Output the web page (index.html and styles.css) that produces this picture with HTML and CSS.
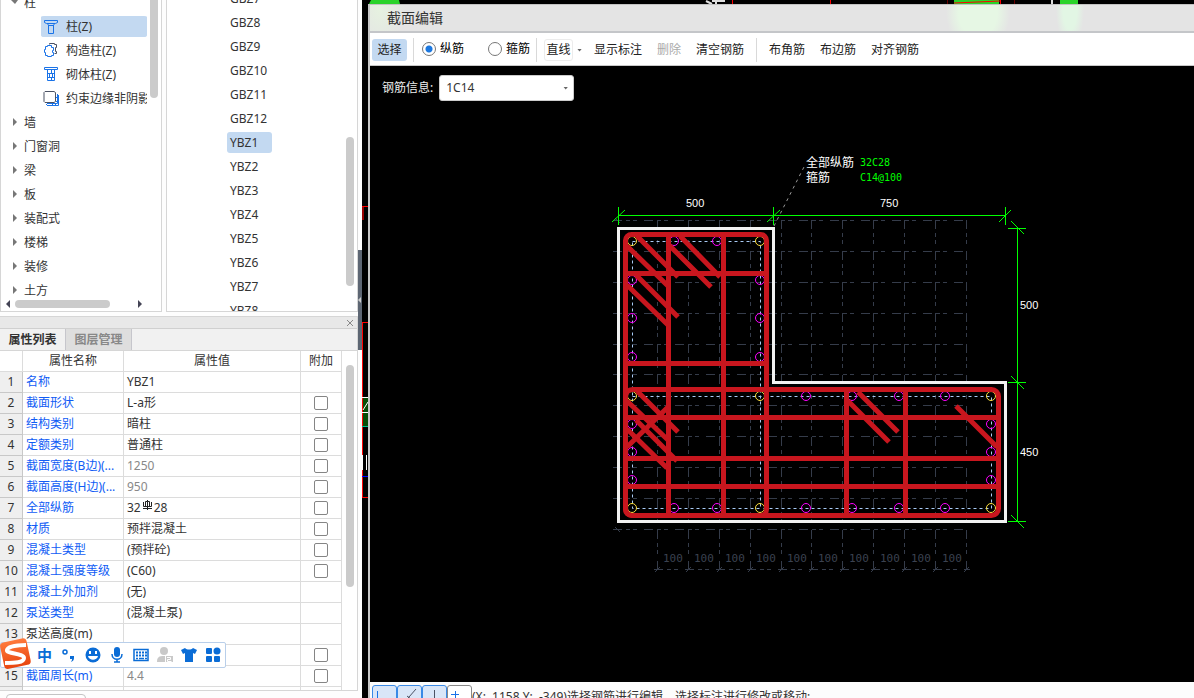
FILE: index.html
```html
<!DOCTYPE html>
<html lang="zh-CN">
<head>
    <meta charset="UTF-8">
    <meta name="viewport" content="width=device-width, initial-scale=1.0">
    <title>截面编辑</title>
    <link rel="stylesheet" href="styles.css">
</head>
<body>
    <div class="side">
        <div class="browse">
            <div class="tree">
                <ul class="tree-list">
                    <li class="group open">柱</li>
                    <li class="leaf selected">
                        <svg width="16" height="16" viewBox="0 0 16 16"><path d="M1.500 1.500h13v2l-2 1h-9l-2-1zM4.500 4.500l1 2v8h5v-8l1-2M5 6.500h6"/></svg>柱(Z)
                    </li>
                    <li class="leaf">
                        <svg width="16" height="16" viewBox="0 0 16 16"><path class="dark" d="M6.500 2.500v-1h5v1h2v3h-1v4h1v2h-2"/><path class="solid" d="M4.500 3.500h4v2h2v3h-1v2h1v3h-2v1h-4v-1h-2v-3h-1v-3h1v-3h2z"/></svg>构造柱(Z)
                    </li>
                    <li class="leaf">
                        <svg width="16" height="16" viewBox="0 0 16 16"><path d="M1.500 1.500h13v2h-13zM4.500 4v10.500h7V4M5 7.500h6M5 11.500h6M8.500 4v3.500M6.500 8v3M9.500 8v3M8.500 12v2"/></svg>砌体柱(Z)
                    </li>
                    <li class="leaf">
                        <svg width="16" height="16" viewBox="0 0 16 16"><path d="M4 13.500h10.500V4M5 15.500h10.500V5M3 14l2 2M8 13l3 3M11 13l3 3M13 11l3 3M13 7l3 3"/><path class="dark" d="M2 1.500h9l1.500 1v9l-1.500 1h-9l-1-1v-9z"/></svg>约束边缘非阴影
                    </li>
                    <li class="group">墙</li>
                    <li class="group">门窗洞</li>
                    <li class="group">梁</li>
                    <li class="group">板</li>
                    <li class="group">装配式</li>
                    <li class="group">楼梯</li>
                    <li class="group">装修</li>
                    <li class="group">土方</li>
                </ul>
                <div class="tree-scroll"><span></span></div>
                <div class="tree-hscroll">
                    <i class="arrow-left"></i><span></span><i class="arrow-right"></i>
                </div>
            </div>
            <div class="members">
                <ul>
                    <li>GBZ7</li>
                    <li>GBZ8</li>
                    <li>GBZ9</li>
                    <li>GBZ10</li>
                    <li>GBZ11</li>
                    <li>GBZ12</li>
                    <li><span class="selected">YBZ1</span></li>
                    <li>YBZ2</li>
                    <li>YBZ3</li>
                    <li>YBZ4</li>
                    <li>YBZ5</li>
                    <li>YBZ6</li>
                    <li>YBZ7</li>
                    <li>YBZ8</li>
                </ul>
                <div class="members-scroll"><span></span></div>
            </div>
        </div>

        <div class="props">
            <div class="props-title">
                <button type="button" aria-label="关闭"><svg width="8" height="8" viewBox="0 0 8 8"><path d="M1 1l6 6M7 1l-6 6"/></svg></button>
            </div>
            <div class="tabs">
                <button type="button" class="active">属性列表</button>
                <button type="button">图层管理</button>
            </div>
            <div class="props-body">
                <table>
                    <colgroup><col class="c-num"><col class="c-name"><col><col class="c-add"></colgroup>
                    <thead>
                        <tr><th></th><th>属性名称</th><th>属性值</th><th>附加</th></tr>
                    </thead>
                    <tbody>
                        <tr><td>1</td><td>名称</td><td>YBZ1</td><td></td></tr>
                        <tr><td>2</td><td>截面形状</td><td>L-a形</td><td><input type="checkbox" aria-label="截面形状"></td></tr>
                        <tr><td>3</td><td>结构类别</td><td>暗柱</td><td><input type="checkbox" aria-label="结构类别"></td></tr>
                        <tr><td>4</td><td>定额类别</td><td>普通柱</td><td><input type="checkbox" aria-label="定额类别"></td></tr>
                        <tr><td>5</td><td>截面宽度(B边)(...</td><td class="gray">1250</td><td><input type="checkbox" aria-label="截面宽度"></td></tr>
                        <tr><td>6</td><td>截面高度(H边)(...</td><td class="gray">950</td><td><input type="checkbox" aria-label="截面高度"></td></tr>
                        <tr><td>7</td><td>全部纵筋</td><td>32<svg class="rebar" width="13" height="11" viewBox="0 0 13 11"><path d="M6.500 0v10M4.500 1.500h4v5h-4zM2.500 2v4.500h8V2M2 8.500h9"/></svg>28</td><td><input type="checkbox" aria-label="全部纵筋"></td></tr>
                        <tr><td>8</td><td>材质</td><td>预拌混凝土</td><td><input type="checkbox" aria-label="材质"></td></tr>
                        <tr><td>9</td><td>混凝土类型</td><td>(预拌砼)</td><td><input type="checkbox" aria-label="混凝土类型"></td></tr>
                        <tr><td>10</td><td>混凝土强度等级</td><td>(C60)</td><td><input type="checkbox" aria-label="混凝土强度等级"></td></tr>
                        <tr><td>11</td><td>混凝土外加剂</td><td>(无)</td><td></td></tr>
                        <tr><td>12</td><td>泵送类型</td><td>(混凝土泵)</td><td></td></tr>
                        <tr><td>13</td><td class="plain">泵送高度(m)</td><td></td><td></td></tr>
                        <tr><td></td><td></td><td></td><td><input type="checkbox" aria-label="附加"></td></tr>
                        <tr><td>15</td><td>截面周长(m)</td><td class="gray">4.4</td><td><input type="checkbox" aria-label="截面周长"></td></tr>
                        <tr><td></td><td></td><td></td><td></td></tr>
                    </tbody>
                </table>
                <div class="props-scroll"><span></span></div>
            </div>
        </div>
        <div class="side-foot"><button type="button" aria-label="参数图"></button></div>

        <div class="ime">
            <svg class="ime-logo" width="32" height="32" viewBox="0 0 32 32">
                <defs><linearGradient id="og" x1="0" y1="0" x2="0" y2="1"><stop offset="0" stop-color="#ff7a3c"/><stop offset="1" stop-color="#e8450f"/></linearGradient></defs>
                <rect x="2" y="2" width="27" height="27" rx="4" fill="url(#og)" transform="rotate(-12 16 16)"/>
                <path d="M26 7C19 7 8 8 7 12s17 3 17 8-10 5-19 5" fill="none" stroke="#fff" stroke-width="4"/>
            </svg>
            <b>中</b>
            <svg width="16" height="16" viewBox="0 0 16 16"><circle cx="4" cy="5" r="2" fill="none" stroke="#0a6cd6" stroke-width="1.500"/><path d="M9 9h4v2c0 2-1 3-3 4 1-2 1-2 1-3H9z"/></svg>
            <svg width="16" height="16" viewBox="0 0 16 16"><circle cx="8" cy="8" r="7.500"/><path fill="#fff" d="M4 4h2v3H4zM10 4h2v3h-2zM3 9h10c-1 5-9 5-10 0z"/></svg>
            <svg width="16" height="16" viewBox="0 0 16 16"><rect x="5" y="0" width="6" height="10" rx="3"/><path fill="none" stroke="#0a6cd6" stroke-width="1.500" d="M3 7c0 7 10 7 10 0M8 12v3M5 15h6"/></svg>
            <svg width="16" height="16" viewBox="0 0 16 16"><rect x="1" y="2.500" width="14" height="11" fill="none" stroke="#0a6cd6" stroke-width="1.500"/><path stroke="#0a6cd6" stroke-width="2" stroke-dasharray="2 1" d="M3 5.500h11M3 8.500h11"/><path stroke="#0a6cd6" stroke-width="1.500" d="M3 11.500h2M6 11.500h5M12 11.500h2"/></svg>
            <svg width="16" height="16" viewBox="0 0 16 16" class="off"><circle cx="7" cy="4" r="4"/><path d="M0 15c0-5 2-6 7-6h9v6z"/><path fill="none" stroke="#fff" d="M8.500 15V9M10 10.500h3.500v2h-3v2h4"/></svg>
            <svg width="16" height="16" viewBox="0 0 16 16"><path d="M0 3l4-2c2 2 6 2 8 0l4 2-2 4-2-1v9H4V6L2 7z"/></svg>
            <svg width="16" height="16" viewBox="0 0 16 16"><rect x="1" y="1" width="6" height="6" rx="1"/><circle cx="12" cy="4" r="3.500"/><rect x="1" y="9" width="6" height="6" rx="1"/><rect x="9" y="9" width="6" height="6" rx="1"/></svg>
        </div>
    </div>

    <div class="splitter"><div class="grip"></div></div>

    <div class="workspace">
        <!-- main drawing, mostly hidden by the dialog -->
        <svg class="backdrop" width="832" height="698" viewBox="362 0 832 698">
            <path fill="#29d329" d="M371 0h28l1 4h-31zM954 0h45v4h-45zM1060 0h18v4h-18z"/>
            <path stroke="#f00" d="M732.500 0v4M830.500 0v4M954 3l46-2M1000.500 0v4M362 206.500h6M362 322.500h6M362.500 322v175M362 497.500h6"/>
            <path stroke="#600" d="M947.500 0v4M1014.500 0v4"/>
            <path stroke="#900" stroke-width="2" d="M363 207v13"/>
            <path stroke="#ddd" stroke-width="2" d="M706 1l6 3M712 1h13M716 0v4M1052 0v4"/>
            <path fill="#064d06" d="M363 397h5v30h-5z"/>
            <path stroke="#fff" d="M362 397.500h6M362 412.500h6M363 410l5-8M366.500 455v15M362.500 455v15"/>
            <path stroke="#00c090" d="M362 426.500h6"/>
            <path stroke="#00f" d="M362 476.500h6"/>
        </svg>

        <div class="dialog">
            <div class="dialog-title">截面编辑</div>
            <div class="toolbar">
                <button type="button" class="on">选择</button>
                <i class="sep"></i>
                <label><input type="radio" name="kind" checked>纵筋</label>
                <label><input type="radio" name="kind">箍筋</label>
                <i class="sep"></i>
                <button type="button" class="line">直线</button>
                <i class="caret"></i>
                <button type="button">显示标注</button>
                <button type="button" disabled>删除</button>
                <button type="button">清空钢筋</button>
                <i class="sep"></i>
                <button type="button">布角筋</button>
                <button type="button">布边筋</button>
                <button type="button">对齐钢筋</button>
            </div>

            <div class="canvas">
                <div class="rebar-form">
                    <label for="rebarInfo">钢筋信息:</label>
                    <span class="combo">
                        <select id="rebarInfo"><option>1C14</option></select>
                        <i class="caret"></i>
                    </span>
                </div>
                <svg class="drawing" width="824" height="616" viewBox="370 66 824 616">
                    <!-- grid -->
                    <g class="grid">
                        <path d="M613 220.500h354M613 251.500h354M613 282.500h354M613 313.500h354M613 344.500h354M613 374.500h354M613 405.500h354M613 436.500h354M613 467.500h354M613 498.500h354M613 529.500h354M654 569.500h316"/>
                        <path d="M657.500 220v354M688.500 220v354M719.500 220v354M750.500 220v354M781.500 220v354M811.500 220v354M842.500 220v354M873.500 220v354M904.500 220v354M935.500 220v354M966.500 220v354"/>
                        <path class="tick" d="M655 572l5-5M686 572l5-5M717 572l5-5M748 572l5-5M779 572l5-5M809 572l5-5M840 572l5-5M871 572l5-5M902 572l5-5M933 572l5-5M964 572l5-5M615 218l5 5M615 527l5 5"/>
                    </g>
                    <g class="grid-text">
                        <text x="663" y="562">100</text>
                        <text x="694" y="562">100</text>
                        <text x="725" y="562">100</text>
                        <text x="756" y="562">100</text>
                        <text x="787" y="562">100</text>
                        <text x="818" y="562">100</text>
                        <text x="849" y="562">100</text>
                        <text x="880" y="562">100</text>
                        <text x="911" y="562">100</text>
                        <text x="942" y="562">100</text>
                    </g>

                    <!-- section outline -->
                    <path class="outline" d="M618.500 228.500h155v154h232v139h-387z"/>

                    <!-- bar centre lines and bars -->
                    <path class="axis" d="M632.500 241.500h128v267h-128zM632.500 396.500h359v112h-231"/>
                    <g class="corner">
                        <circle cx="632" cy="241" r="4.500"/><circle cx="760" cy="241" r="4.500"/>
                        <circle cx="632" cy="396" r="4.500"/><circle cx="760" cy="396" r="4.500"/>
                        <circle cx="632" cy="508" r="4.500"/><circle cx="760" cy="508" r="4.500"/>
                        <circle cx="991" cy="396" r="4.500"/><circle cx="991" cy="508" r="4.500"/>
                    </g>
                    <g class="edge">
                        <circle cx="674" cy="241" r="4.500"/><circle cx="717" cy="241" r="4.500"/>
                        <circle cx="632" cy="280" r="4.500"/><circle cx="760" cy="280" r="4.500"/>
                        <circle cx="632" cy="318" r="4.500"/><circle cx="760" cy="318" r="4.500"/>
                        <circle cx="632" cy="357" r="4.500"/><circle cx="760" cy="357" r="4.500"/>
                        <circle cx="632" cy="424" r="4.500"/><circle cx="632" cy="452" r="4.500"/><circle cx="632" cy="480" r="4.500"/>
                        <circle cx="674" cy="508" r="4.500"/><circle cx="717" cy="508" r="4.500"/>
                        <circle cx="806" cy="396" r="4.500"/><circle cx="852" cy="396" r="4.500"/><circle cx="899" cy="396" r="4.500"/><circle cx="945" cy="396" r="4.500"/>
                        <circle cx="806" cy="508" r="4.500"/><circle cx="852" cy="508" r="4.500"/><circle cx="899" cy="508" r="4.500"/><circle cx="945" cy="508" r="4.500"/>
                        <circle cx="991" cy="424" r="4.500"/><circle cx="991" cy="452" r="4.500"/><circle cx="991" cy="480" r="4.500"/>
                    </g>

                    <!-- stirrups -->
                    <g class="stirrup">
                        <rect x="625.500" y="234.500" width="141" height="281" rx="6"/>
                        <rect x="625.500" y="389.500" width="373" height="126" rx="7"/>
                        <path d="M625.500 273.500h141M625.500 363.500h141M625.500 417.500h373M625.500 458.500h373M625.500 486.500h373"/>
                        <path d="M668.500 235v280M723.500 235v280M846.500 390v125M905.500 390v125"/>
                        <path d="M637 236l41 41M627 246l41 40M680 236l40 41M668 244l43 43M636 275l42 42M627 285l41 40"/>
                        <path d="M637 391l41 41M627 401l41 39M636 420l41 41M627 429l40 39M627 447l41 -40"/>
                        <path d="M858 392l40 40M848 401l41 41M956 406l41 41"/>
                    </g>

                    <!-- dimensions -->
                    <path class="dim" d="M618 215.500h388M618.500 207v18M773.500 207v18M1005.500 207v18M612 222l13-12M767 222l13-12M999 222l12-12M1017.500 228v294M1008 228.500h18M1008 382.500h18M1008 521.500h18M1011 221l13 13M1011 376l13 13M1011 515l13 13"/>
                    <g class="dim-text">
                        <text x="686" y="207">500</text>
                        <text x="880" y="207">750</text>
                        <text x="1020" y="309">500</text>
                        <text x="1020" y="456">450</text>
                    </g>

                    <!-- leader note -->
                    <path class="leader" d="M774 226l31-61"/>
                    <g class="note">
                        <text x="806" y="167">全部纵筋</text>
                        <text x="806" y="182">箍筋</text>
                    </g>
                    <g class="note-value">
                        <text x="860" y="166">32C28</text>
                        <text x="860" y="181">C14@100</text>
                    </g>
                </svg>
            </div>

            <div class="status">
                <button type="button" class="on" aria-label="正交"><svg width="23" height="22" viewBox="0 0 23 22"><path d="M4.500 5v12h12"/></svg></button>
                <button type="button" class="on" aria-label="捕捉"><svg width="23" height="22" viewBox="0 0 23 22"><path class="dark" d="M18 3l-7 8-5 5M9 10l4 3"/></svg></button>
                <button type="button" class="on" aria-label="垂点"><svg width="23" height="22" viewBox="0 0 23 22"><path class="dark" d="M11.500 4v12M4 16.500h15"/></svg></button>
                <button type="button" aria-label="交点"><svg width="23" height="22" viewBox="0 0 23 22"><path d="M3 8.500h8M7.500 5v8"/></svg></button>
                <span>(X:&nbsp; 1158 Y:&nbsp; -349)选择钢筋进行编辑，选择标注进行修改或移动;</span>
            </div>
        </div>
    </div>
</body>
</html>
```
FILE: styles.css
```css
* { box-sizing: border-box; }
body {
    margin: 0;
    height: 100vh;
    display: flex;
    overflow: hidden;
    background: #fff;
    color: #333;
    font-family: "Noto Sans", "Noto Sans CJK SC", sans-serif;
    font-size: 12px;
    line-height: 16px;
}
button, select, input { font: inherit; color: inherit; margin: 0; }
button { border: none; background: none; padding: 0; }
ul { list-style: none; margin: 0; padding: 0; }
svg { display: block; flex: none; }

/* left side */
.side { position: relative; flex: 0 0 358px; display: flex; flex-direction: column; background: #fdfdfd; }
.browse { display: flex; gap: 4px; flex: none; height: 312px; margin-bottom: 4px; }
.tree, .members { background: #fff; border: 1px solid #d6d6d6; border-top: none; overflow: hidden; }
.tree {
    flex: 0 0 162px;
    display: grid;
    grid-template-columns: 146px 1fr;
    grid-template-rows: 298px 1fr;
}
.tree-list { overflow: hidden; height: 298px; }
.tree-list li { height: 24px; line-height: 25px; white-space: nowrap; }
.tree-list li:first-child { margin-top: -10px; }
.group { display: flex; align-items: center; padding-left: 10px; }
.group::before {
    content: "";
    width: 13px;
    height: 8px;
    background: #777;
    clip-path: polygon(2px 0, 6px 4px, 2px 8px);
}
.group.open::before { clip-path: polygon(0 2px, 7px 2px, 4px 6px); }
.leaf { display: flex; align-items: center; gap: 7px; margin-left: 40px; padding-left: 2px; }
.leaf.selected { background: #c3d9f1; background-clip: content-box; height: 24px; padding: 2px 0 1px; border-radius: 3px; line-height: 21px; }
.leaf.selected svg { margin-left: 2px; }
.leaf svg { fill: none; stroke: #1a73e8; stroke-width: 1; }
.leaf svg .dark { stroke: #4b5264; fill: #fff; }
.leaf svg .solid { fill: #fff; }
.tree-scroll { padding-left: 3px; }
.tree-scroll span { display: block; width: 8px; height: 98px; background: #cbcbcb; border-radius: 0 0 4px 4px; }
.tree-hscroll { grid-column: 1 / 3; display: flex; align-items: flex-start; padding: 2px 0 0 5px; }
.tree-hscroll span { width: 95px; height: 8px; margin: 0 28px 0 5px; background: #cbcbcb; border-radius: 4px; }
.arrow-left, .arrow-right { width: 4px; height: 8px; background: #445; }
.arrow-left { clip-path: polygon(4px 0, 0 4px, 4px 8px); }
.arrow-right { clip-path: polygon(0 0, 4px 4px, 0 8px); }

.members { flex: 1; display: flex; }
.members ul { flex: 1; padding-left: 60px; }
.members li { height: 24px; padding-top: 2px; }
.members li:first-child { margin-top: -14px; }
.members li, .members .selected { line-height: 21px; padding-left: 3px; }
.members .selected { display: block; width: 45px; margin-left: -3px; background: #c3d9f1; border-radius: 3px; }
.members-scroll { flex: 0 0 11px; padding-top: 137px; }
.members-scroll span { display: block; width: 8px; height: 149px; background: #cbcbcb; border-radius: 4px; }

/* property grid */
.props { flex: 1; min-height: 0; display: flex; flex-direction: column; border: 1px solid #d6d6d6; border-left: none; overflow: hidden; }
.props-title { flex: 0 0 12px; display: flex; justify-content: flex-end; align-items: center; padding-right: 3px; background: #e8e8e8; border-bottom: 1px solid #d0d0d0; }
.props-title svg { stroke: #888; fill: none; }
.tabs { flex: 0 0 22px; display: flex; background: #f1f1f1; border-bottom: 1px solid #d6d6d6; }
.tabs button { width: 66px; border-right: 1px solid #c6c6cc; background: #dedede; color: #888; font-weight: bold; }
.tabs .active { background: #f1f1f1; color: #333; }
.props-body { flex: 1; min-height: 0; display: flex; background: #fff; }
table { flex: 1; table-layout: fixed; width: 342px; border-collapse: separate; border-spacing: 0; }
.c-num { width: 23px; }
.c-name { width: 101px; }
.c-add { width: 41px; }
th, td { height: 21px; padding: 0; border-right: 1px solid #dcdcdc; border-bottom: 1px solid #dcdcdc; font-weight: normal; text-align: center; line-height: 16px; white-space: nowrap; }
td:nth-child(1) { background: #efefef; border-color: #c8c8c8; }
td:nth-child(2) { color: #105cf5; text-align: left; padding-left: 3px; }
td:nth-child(3) { text-align: left; padding-left: 3px; }
td.plain { color: #333; }
td.gray { color: #888; }
.rebar { display: inline-block; vertical-align: 1px; fill: none; stroke: #222; }
input[type="checkbox"] {
    appearance: none;
    display: block;
    width: 14px;
    height: 14px;
    margin: 0 auto;
    border: 1px solid #858585;
    border-radius: 2px;
    background: #fff;
}
.props-scroll { flex: 0 0 15px; padding: 14px 0 0 4px; }
.props-scroll span { display: block; width: 8px; height: 222px; background: #cbcbcb; border-radius: 4px; }
.side-foot { flex: 0 0 7px; overflow: hidden; padding: 3px 0 0 6px; }
.side-foot button { display: block; width: 80px; height: 24px; border: 1px solid #c4c4c4; border-radius: 4px; background: #fff; }

/* floating input bar */
.ime {
    position: absolute;
    left: 0;
    bottom: 30px;
    width: 226px;
    height: 26px;
    display: flex;
    align-items: center;
    gap: 8px;
    padding-left: 36px;
    background: #fff;
    border: 1px solid #b9cfea;
    border-radius: 2px;
}
.ime svg { fill: #0a6cd6; }
.ime svg.off { fill: #c9c9c9; }
.ime b { width: 16px; color: #0a6cd6; font-size: 15px; }
.ime svg.ime-logo { position: absolute; left: -1px; top: -5px; }

.splitter { flex: 0 0 4px; padding-top: 250px; background: #fdfdfd; }
.grip { height: 100px; background: #5d6673; display: flex; align-items: center; }
.grip::before { content: ""; width: 3px; height: 6px; background: #ccc; clip-path: polygon(3px 0, 0 3px, 3px 6px); }

/* section editor */
.workspace { position: relative; flex: 1; min-width: 0; padding: 4px 0 0 6px; background: #000; }
.backdrop { position: absolute; left: 0; top: 0; }
.dialog { position: relative; height: 100%; display: flex; flex-direction: column; border-left: 2px solid #c6c6c6; border-top: 1px solid #c2c2c2; background: #fff; }
.dialog-title {
    flex: 0 0 28px;
    padding-left: 17px;
    border-bottom: 2px solid #c4c6c9;
    font-size: 14px;
    line-height: 26px;
    background:
        radial-gradient(ellipse 32px 40px at 608px 8px, #e6f7e4 60%, transparent),
        radial-gradient(ellipse 14px 40px at 700px 4px, #e2f6e4 50%, transparent),
        radial-gradient(ellipse 26px 40px at 10px 4px, #e6f2e0, transparent),
        #e4e4e4;
}
.toolbar { flex: 0 0 33px; display: flex; align-items: center; padding: 2px 0 0 2px; border-bottom: 1px solid #c8c8c8; color: #222; }
.toolbar button { height: 22px; margin-right: 15px; }
.toolbar button:disabled { color: #aaa; }
.toolbar .on { width: 35px; margin-right: 6px; border-radius: 3px; background: #c3d9f1; }
.toolbar .line { width: 29px; margin: 0 4px 0 7px; border: 1px solid #ececec; border-radius: 3px; }
.toolbar .caret { margin-right: 12px; }
.toolbar label { display: flex; align-items: center; gap: 4px; margin: 0 6px 3px 8px; color: #000; }
.toolbar label + label { margin-left: 18px; }
.toolbar .sep { width: 1px; height: 24px; background: #d9d9d9; }
.toolbar button:nth-last-of-type(4) { margin-right: 12px; }
.toolbar button:nth-last-of-type(3) { margin-left: 12px; }
input[type="radio"] { appearance: none; width: 14px; height: 14px; border: 1px solid #777; border-radius: 50%; background: #fff; }
input[type="radio"]:checked { background: radial-gradient(circle, #1c78e0 3px, #fff 4px); }
.caret { flex: none; width: 5px; height: 3px; background: #666; clip-path: polygon(0 0, 100% 0, 50% 100%); }

.canvas { position: relative; flex: 1; min-height: 0; overflow: hidden; background: #000; }
.rebar-form { position: relative; z-index: 1; display: flex; align-items: center; gap: 6px; width: 210px; padding: 9px 0 0 12px; color: #eee; }
.combo { position: relative; display: flex; align-items: center; }
.combo select { appearance: none; width: 135px; height: 26px; padding: 0 6px; border: 1px solid #ccc; border-radius: 3px; background: #fff; color: #333; }
.combo .caret { position: absolute; right: 6px; }
.drawing { position: absolute; left: 0; top: 0; }

.drawing path, .drawing rect, .drawing circle { fill: none; }
.grid { stroke: #353c4a; stroke-dasharray: 9 4 4 3 4 7; }
.grid .tick { stroke-dasharray: none; }
.grid-text { fill: #3b4250; font: 11px "DejaVu Sans Mono", monospace; }
.outline { stroke: #f2f2f2; stroke-width: 3; }
.axis { stroke: #a9cbf5; stroke-dasharray: 3 3; }
.corner { stroke: #ffe040; }
.edge { stroke: #f0f; }
.stirrup { stroke: #c8161e; stroke-width: 5; }
.dim { stroke: #0f0; }
.dim-text { fill: #fff; font: 11px "Liberation Sans", sans-serif; }
.leader { stroke: #999; stroke-dasharray: 3 4; }
.note { fill: #fff; font-size: 12px; }
.note-value { fill: #0f0; font: 10px "DejaVu Sans Mono", monospace; }

.status { flex: 0 0 16px; display: flex; align-items: flex-start; overflow: hidden; padding: 3px 0 0 2px; background: #fcfcfc; }
.status button { flex: none; width: 25px; height: 24px; border: 1px solid #888; border-radius: 3px; background: #fff; }
.status .on { border-color: #3a8ae6; background: #d9e6f8; }
.status svg { fill: none; stroke: #1a73e8; }
.status svg .dark { stroke: #4b5264; }
.status span { line-height: 24px; white-space: nowrap; }
```
